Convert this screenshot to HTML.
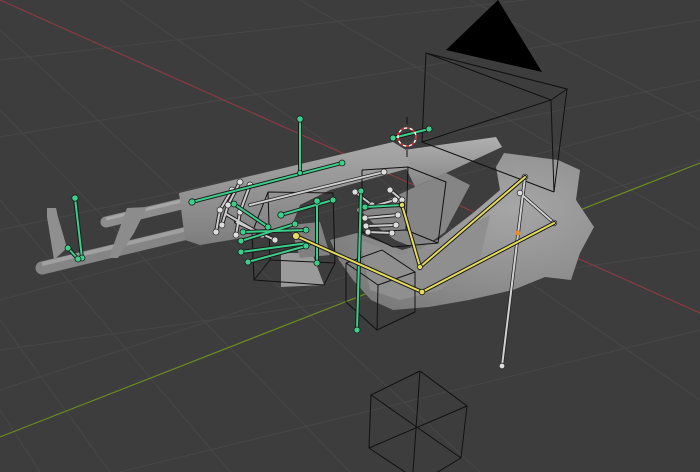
<!DOCTYPE html>
<html><head><meta charset="utf-8"><style>
html,body{margin:0;padding:0;background:#3d3d3d;width:700px;height:472px;overflow:hidden}
svg{display:block}
</style></head><body>
<svg width="700" height="472" viewBox="0 0 700 472" xmlns="http://www.w3.org/2000/svg">
<defs>
<linearGradient id="gb" x1="0" y1="0" x2="0" y2="1"><stop offset="0" stop-color="#a8a8a8"/><stop offset="1" stop-color="#7e7e7e"/></linearGradient>
<radialGradient id="bd" cx="0.7" cy="0.35" r="0.8"><stop offset="0" stop-color="#a6a6a6"/><stop offset="0.6" stop-color="#8e8e8e"/><stop offset="1" stop-color="#7a7a7a"/></radialGradient>
<linearGradient id="rc" x1="0" y1="0" x2="0" y2="1"><stop offset="0" stop-color="#b0b0b0"/><stop offset="1" stop-color="#858585"/></linearGradient>
</defs>
<rect width="700" height="472" fill="#3d3d3d"/>
<g stroke="#474747" stroke-width="1" fill="none">
<line x1="0" y1="60" x2="700" y2="-20"/>
<line x1="0" y1="137" x2="700" y2="20"/>
<line x1="0" y1="230" x2="700" y2="80"/>
<line x1="0" y1="350" x2="700" y2="250"/>
<line x1="0" y1="390" x2="700" y2="160"/>
<line x1="0" y1="300" x2="700" y2="110"/>
<line x1="120" y1="472" x2="700" y2="330"/>
<line x1="0" y1="30" x2="480" y2="472"/>
<line x1="0" y1="110" x2="350" y2="472"/>
<line x1="0" y1="200" x2="230" y2="472"/>
<line x1="0" y1="320" x2="110" y2="472"/>
<line x1="120" y1="0" x2="700" y2="400"/>
<line x1="300" y1="0" x2="700" y2="230"/>
<line x1="470" y1="0" x2="700" y2="120"/>
<line x1="0" y1="410" x2="40" y2="472"/>
</g>
<line x1="0" y1="0" x2="700" y2="313" stroke="#8a3a44" stroke-width="1.2"/>
<line x1="0" y1="437" x2="700" y2="163" stroke="#6c8a22" stroke-width="1.2"/>

<!-- body / arm mesh -->
<polygon points="504,153 558,160 580,170 576,200 594,227 580,253 571,280 545,277 513,290 469,300 429,307 393,310 371,300 353,280 339,260 330,240 357,233 402,250 438,240 473,213 500,190 496,167" fill="url(#bd)"/>
<polygon points="360,240 400,255 440,248 470,225 490,215 480,260 440,290 400,300 370,290" fill="#8f8f8f"/>
<polygon points="404,150 496,137 502,147 446,173 415,187 406,168" fill="url(#rc)"/>
<polygon points="415,187 446,173 470,185 445,232 420,250 395,240 375,225 362,212" fill="#858585"/>
<!-- barrels -->
<line x1="42" y1="268" x2="200" y2="230" stroke="#858585" stroke-width="13" stroke-linecap="round"/>
<line x1="42" y1="264" x2="200" y2="226" stroke="#a0a0a0" stroke-width="4"/>
<line x1="106" y1="222" x2="190" y2="202" stroke="#8e8e8e" stroke-width="11" stroke-linecap="round"/>
<line x1="106" y1="219" x2="190" y2="199" stroke="#a8a8a8" stroke-width="3"/>
<polygon points="47,208 56,208 58,217 67,248 54,260 47,217" fill="#8f8f8f"/>
<polygon points="127,208 147,207 134,233 118,258 109,258 116,238" fill="#8c8c8c"/>
<!-- receiver -->
<polygon points="179,193 393,142 406,150 410,168 330,190 300,205 290,230 200,245 185,240" fill="url(#gb)"/>
<polygon points="281,253 312,253 324,285 281,287" fill="#9a9a9a"/>
<polygon points="290,225 320,222 330,255 300,258" fill="#808080"/>

<g stroke="#111" stroke-width="1" fill="none">
<polyline points="426,53 567,89 551,100 426,53 422,142 551,100 554,192 567,89"/>
<line x1="422" y1="142" x2="554" y2="192"/>
<polyline points="268,192 333,193 335,263 324,285 254,280 252,233 268,192"/>
<line x1="268" y1="192" x2="270" y2="260"/><line x1="270" y1="260" x2="335" y2="263"/><line x1="254" y1="280" x2="270" y2="260"/>
<polyline points="362,170 408,167 446,182 438,243 393,247 362,232 362,170"/>
<line x1="408" y1="167" x2="406" y2="230"/><line x1="406" y1="230" x2="438" y2="243"/><line x1="362" y1="232" x2="406" y2="230"/>
<polyline points="346,263 382,250 415,272 415,312 377,330 346,302 346,263"/>
<line x1="346" y1="263" x2="378" y2="285"/><line x1="378" y1="285" x2="415" y2="272"/><line x1="378" y1="285" x2="377" y2="330"/>
<polyline points="420,371 371,395 369,448 414,478"/>
<polyline points="420,371 467,406 461,458 416,485"/>
<line x1="420" y1="371" x2="413" y2="472"/>
<line x1="371" y1="395" x2="461" y2="458"/>
<line x1="467" y1="406" x2="369" y2="448"/>
</g>
<polygon points="446,50 498,0 542,72" fill="#000"/>

<g stroke="#222" stroke-width="3.5" stroke-linecap="round">
<line x1="250" y1="205" x2="384" y2="172"/>
<line x1="525" y1="177" x2="502" y2="366"/>
<line x1="520" y1="193" x2="554" y2="223"/>
</g>
<g stroke="#d0d0d0" stroke-width="2" stroke-linecap="round">
<line x1="250" y1="205" x2="384" y2="172"/>
<line x1="525" y1="177" x2="502" y2="366"/>
<line x1="520" y1="193" x2="554" y2="223"/>
</g>
<g stroke="#222" stroke-width="4" stroke-linecap="round">
<line x1="240" y1="182" x2="228" y2="205"/><line x1="228" y1="205" x2="222" y2="225"/>
<line x1="232" y1="190" x2="220" y2="210"/><line x1="220" y1="210" x2="216" y2="232"/>
<line x1="250" y1="185" x2="240" y2="212"/><line x1="240" y1="212" x2="236" y2="235"/>
<line x1="226" y1="214" x2="262" y2="235"/><line x1="236" y1="222" x2="275" y2="240"/>
<line x1="355" y1="192" x2="372" y2="205"/><line x1="360" y1="210" x2="395" y2="200"/>
<line x1="365" y1="218" x2="398" y2="215"/><line x1="366" y1="226" x2="396" y2="225"/>
<line x1="368" y1="232" x2="392" y2="233"/><line x1="390" y1="190" x2="402" y2="200"/>
</g>
<g stroke="#ccc" stroke-width="2" fill="#ccc">
<line x1="240" y1="182" x2="228" y2="205"/><line x1="228" y1="205" x2="222" y2="225"/>
<line x1="232" y1="190" x2="220" y2="210"/><line x1="220" y1="210" x2="216" y2="232"/>
<line x1="250" y1="185" x2="240" y2="212"/><line x1="240" y1="212" x2="236" y2="235"/>
<line x1="226" y1="214" x2="262" y2="235"/><line x1="236" y1="222" x2="275" y2="240"/>
<line x1="355" y1="192" x2="372" y2="205"/><line x1="360" y1="210" x2="395" y2="200"/>
<line x1="365" y1="218" x2="398" y2="215"/><line x1="366" y1="226" x2="396" y2="225"/>
<line x1="368" y1="232" x2="392" y2="233"/><line x1="390" y1="190" x2="402" y2="200"/>
</g>
<g fill="#ddd" stroke="#333" stroke-width="0.8">
<circle cx="240" cy="182" r="3"/><circle cx="228" cy="205" r="3"/><circle cx="222" cy="225" r="3"/>
<circle cx="232" cy="190" r="3"/><circle cx="220" cy="210" r="3"/><circle cx="216" cy="232" r="3"/>
<circle cx="250" cy="185" r="3"/><circle cx="240" cy="212" r="3"/><circle cx="236" cy="235" r="3"/>
<circle cx="262" cy="235" r="3"/><circle cx="275" cy="240" r="3"/><circle cx="384" cy="172" r="3"/>
<circle cx="355" cy="192" r="3"/><circle cx="372" cy="205" r="3"/><circle cx="360" cy="210" r="3"/>
<circle cx="395" cy="200" r="3"/><circle cx="365" cy="218" r="3"/><circle cx="398" cy="215" r="3"/>
<circle cx="366" cy="226" r="3"/><circle cx="396" cy="225" r="3"/><circle cx="368" cy="232" r="3"/>
<circle cx="392" cy="233" r="3"/><circle cx="390" cy="190" r="3"/><circle cx="402" cy="200" r="3"/>
<circle cx="525" cy="177" r="2.8"/><circle cx="502" cy="366" r="2.8"/><circle cx="554" cy="223" r="2.8"/><circle cx="520" cy="193" r="2.8"/>
</g>

<g stroke="#1a1a1a" stroke-width="4" stroke-linecap="round">
<line x1="300" y1="119" x2="300" y2="173"/><line x1="192" y1="202" x2="342" y2="163"/>
<line x1="75" y1="198" x2="82" y2="258"/><line x1="68" y1="248" x2="78" y2="259"/>
<line x1="393" y1="138" x2="429" y2="129"/>
<line x1="361" y1="191" x2="357" y2="330"/>
<line x1="317" y1="201" x2="317" y2="263"/><line x1="281" y1="215" x2="333" y2="200"/>
<line x1="243" y1="232" x2="306" y2="230"/><line x1="241" y1="241" x2="295" y2="224"/>
<line x1="241" y1="252" x2="308" y2="243"/><line x1="248" y1="262" x2="306" y2="246"/>
<line x1="268" y1="227" x2="234" y2="204"/><line x1="365" y1="207" x2="402" y2="205"/>
</g>
<g stroke="#3ccf8a" stroke-width="2" stroke-linecap="round">
<line x1="300" y1="119" x2="300" y2="173"/><line x1="192" y1="202" x2="342" y2="163"/>
<line x1="75" y1="198" x2="82" y2="258"/><line x1="68" y1="248" x2="78" y2="259"/>
<line x1="393" y1="138" x2="429" y2="129"/>
<line x1="361" y1="191" x2="357" y2="330"/>
<line x1="317" y1="201" x2="317" y2="263"/><line x1="281" y1="215" x2="333" y2="200"/>
<line x1="243" y1="232" x2="306" y2="230"/><line x1="241" y1="241" x2="295" y2="224"/>
<line x1="241" y1="252" x2="308" y2="243"/><line x1="248" y1="262" x2="306" y2="246"/>
<line x1="268" y1="227" x2="234" y2="204"/><line x1="365" y1="207" x2="402" y2="205"/>
</g>
<g fill="#3ccf8a" stroke="#1a1a1a" stroke-width="0.8">
<circle cx="300" cy="119" r="3.2"/><circle cx="300" cy="173" r="2.6"/><circle cx="192" cy="202" r="3.2"/><circle cx="342" cy="163" r="3"/>
<circle cx="75" cy="198" r="3.2"/><circle cx="82" cy="258" r="3"/><circle cx="68" cy="248" r="3"/><circle cx="78" cy="259" r="3"/>
<circle cx="393" cy="138" r="3"/><circle cx="429" cy="129" r="3"/>
<circle cx="361" cy="191" r="3"/><circle cx="357" cy="330" r="3"/>
<circle cx="317" cy="201" r="3.2"/><circle cx="317" cy="263" r="3"/><circle cx="281" cy="215" r="3.2"/><circle cx="333" cy="200" r="3"/>
<circle cx="243" cy="232" r="3"/><circle cx="306" cy="230" r="3"/><circle cx="241" cy="241" r="3"/><circle cx="295" cy="224" r="3"/>
<circle cx="241" cy="252" r="3"/><circle cx="308" cy="243" r="3"/><circle cx="248" cy="262" r="3"/><circle cx="306" cy="246" r="3"/>
<circle cx="268" cy="227" r="3"/><circle cx="234" cy="204" r="3"/><circle cx="365" cy="207" r="3"/><circle cx="402" cy="205" r="3"/>
</g>

<g stroke="#1a1a1a" stroke-width="4" stroke-linecap="round" fill="none">
<polyline points="296,236 422,292 554,223"/>
<polyline points="402,205 420,267 525,177"/>
</g>
<g stroke="#e6dc5a" stroke-width="2" stroke-linecap="round" fill="none">
<polyline points="296,236 422,292 554,223"/>
<polyline points="402,205 420,267 525,177"/>
</g>
<g fill="#e6dc5a" stroke="#1a1a1a" stroke-width="0.8">
<circle cx="296" cy="236" r="3.5"/><circle cx="422" cy="292" r="2.8"/><circle cx="420" cy="267" r="2.6"/><circle cx="402" cy="205" r="2.6"/>
</g>
<circle cx="518" cy="233" r="2.5" fill="#f08a20"/>

<circle cx="407" cy="137" r="9" fill="none" stroke="#fff" stroke-width="1.5"/>
<circle cx="407" cy="137" r="9" fill="none" stroke="#d02020" stroke-width="1.5" stroke-dasharray="3,3"/>
<line x1="407" y1="117" x2="407" y2="124" stroke="#111" stroke-width="1"/>
<line x1="407" y1="150" x2="407" y2="157" stroke="#111" stroke-width="1"/>
</svg>
</body></html>
